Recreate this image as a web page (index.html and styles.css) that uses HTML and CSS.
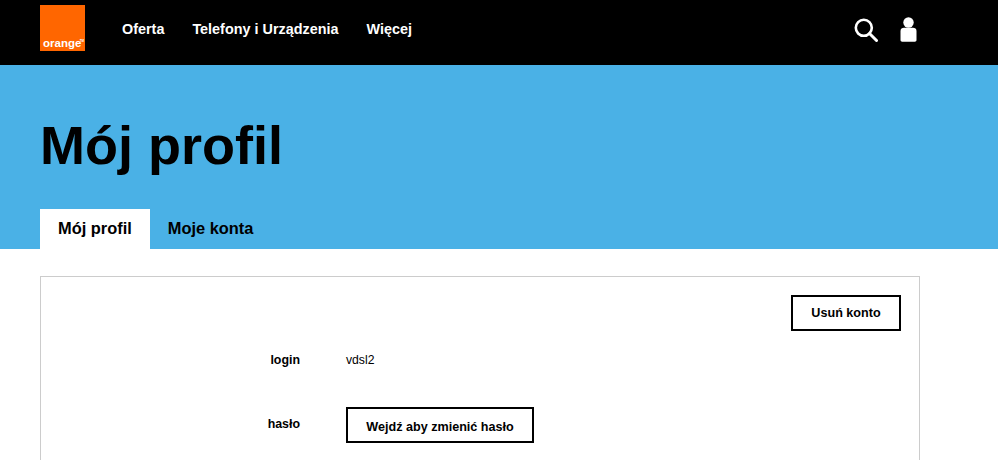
FILE: index.html
```html
<!DOCTYPE html>
<html lang="pl">
<head>
    <meta charset="UTF-8">
    <meta name="viewport" content="width=device-width, initial-scale=1.0">
    <title>Mój profil</title>
    <link rel="stylesheet" href="styles.css">
</head>
<body>
    <header class="topbar">
        <a class="logo" href="#"><span class="logo-text">orange</span><span class="logo-tm">TM</span></a>
        <nav class="mainnav">
            <a href="#">Oferta</a>
            <a href="#">Telefony i Urządzenia</a>
            <a href="#">Więcej</a>
        </nav>
        <div class="topicons">
            <svg class="icon-search" width="24" height="24" viewBox="0 0 24 24" fill="none" stroke="#fff">
                <circle cx="9.800" cy="9.800" r="8" stroke-width="2.6"/>
                <path d="M15.500 15.500L22.500 22.500" stroke-width="3" stroke-linecap="round"/>
            </svg>
            <svg class="icon-user" width="17" height="25" viewBox="0 0 17 25" fill="#fff">
                <circle cx="8.5" cy="5.5" r="5.2"/>
                <path d="M0.5 14c0-2 1.5-3.2 3.5-3.2h9c2 0 3.500 1.200 3.500 3.200v9c0 1-.7 1.700-1.700 1.700H2.200c-1 0-1.700-.7-1.700-1.700z"/>
            </svg>
        </div>
    </header>

    <section class="hero">
        <h1>Mój profil</h1>
        <div class="tabs">
            <a class="tab active" href="#">Mój profil</a>
            <a class="tab" href="#">Moje konta</a>
        </div>
    </section>

    <main class="card">
        <div class="card-actions">
            <a class="btn btn-delete" href="#">Usuń konto</a>
        </div>
        <div class="row row-login">
            <div class="label">login</div>
            <div class="value">vdsl2</div>
        </div>
        <div class="row row-password">
            <div class="label">hasło</div>
            <div class="value"><a class="btn btn-password" href="#">Wejdź aby zmienić hasło</a></div>
        </div>
    </main>
</body>
</html>
```

FILE: styles.css
```css
* { margin: 0; padding: 0; box-sizing: border-box; }
html, body { height: 460px; overflow: hidden; }
body {
    font-family: "Liberation Sans", Arial, sans-serif;
    background: #fff;
    color: #000;
}
a { color: inherit; text-decoration: none; }

.topbar {
    height: 65px;
    background: #000;
    display: flex;
    align-items: flex-start;
    padding: 5px 81px 0 40px;
}
.logo {
    position: relative;
    width: 45px;
    height: 46px;
    background: #ff6600;
    display: flex;
    align-items: flex-end;
    color: #fff;
    font-weight: bold;
    font-size: 11.5px;
    line-height: 14px;
    padding: 0 0 1px 3px;
}
.logo-tm { font-size: 3px; line-height: 3px; position: absolute; top: 35px; right: 1px; }
.mainnav {
    display: flex;
    gap: 28px;
    margin-left: 37px;
    height: 48px;
    align-items: center;
    color: #fff;
    font-weight: bold;
    font-size: 14.4px;
}
.topicons {
    margin-left: auto;
    display: flex;
    align-items: flex-start;
    gap: 22px;
    padding-top: 12px;
}
.icon-search { margin-top: 1px; }

.hero {
    height: 184px;
    background: #4ab1e6;
    padding: 45px 0 0 40px;
    display: flex;
    flex-direction: column;
}
.hero h1 {
    font-size: 54px;
    line-height: 70px;
    font-weight: bold;
    color: #000;
}
.tabs {
    display: flex;
    margin-top: auto;
}
.tab {
    height: 40px;
    padding: 0 18px;
    font-weight: bold;
    font-size: 16.4px;
    line-height: 38px;
}
.tab.active { background: #fff; }

.card {
    margin: 27px 78px 0 40px;
    height: 260px;
    border: 1px solid #ccc;
    padding: 18px 18px 0 0;
}
.card-actions {
    display: flex;
    justify-content: flex-end;
}
.btn {
    display: inline-block;
    border: 2px solid #000;
    font-weight: bold;
    font-size: 12.6px;
    text-align: center;
}
.btn-delete { width: 110px; height: 36px; line-height: 32px; }
.btn-password { width: 188px; height: 36px; line-height: 34px; padding-top: 1px; }

.row {
    display: flex;
    font-size: 12.4px;
}
.label {
    width: 259px;
    text-align: right;
    font-weight: bold;
}
.value { margin-left: 46px; font-size: 12.2px; }
.row-login { margin-top: 22px; line-height: 14px; }
.row-password { margin-top: 40px; }
.row-password .label { padding-top: 10px; line-height: 14px; }
```
